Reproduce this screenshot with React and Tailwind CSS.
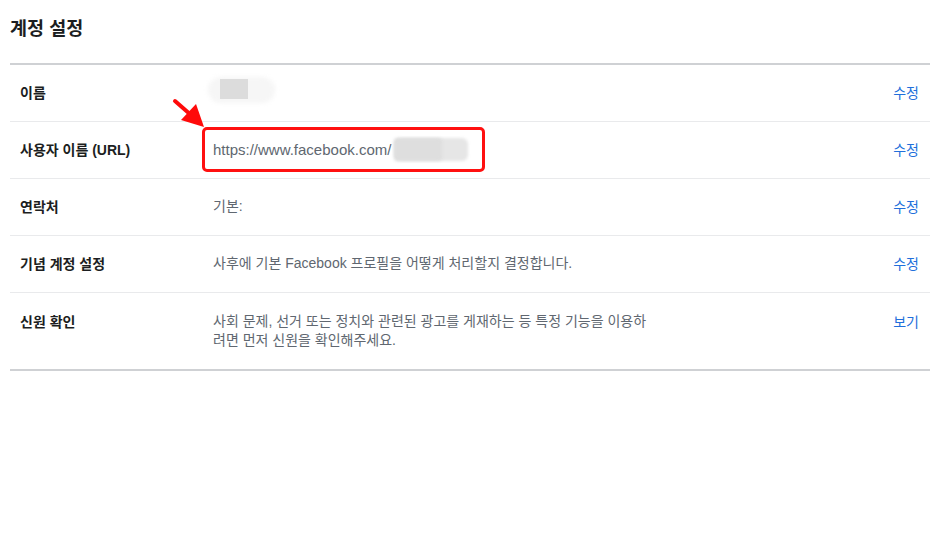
import React from "react";

const FONT = { fontFamily: '"Liberation Sans", "Noto Sans CJK KR", sans-serif' };

function Row({ label, children, action, last, tall }) {
  return (
    <div
      className={
        "flex items-start pl-[10px] pr-[11px] " +
        (tall ? "pt-[19px] pb-[19px] " : "pt-[18px] pb-[18px] ") +
        (last ? "" : "border-b border-[#e9eaec]")
      }
    >
      <div className="w-[193px] shrink-0 text-[14px] leading-[20px] font-bold text-[#1c1e21]">
        {label}
      </div>
      <div className="flex-1 text-[14px] leading-[19px] text-[#606770]">{children}</div>
      <a className="shrink-0 text-[14px] leading-[20px] text-[#216fdb]">{action}</a>
    </div>
  );
}

export default function App() {
  return (
    <div className="relative w-[937px] h-[537px] bg-white" style={FONT}>
      <div className="ml-[10px] mr-[7px]">
        <div className="h-[63px] flex items-center pb-[6px]">
          <h1 className="text-[18.5px] font-bold text-[#1c1e21]">계정 설정</h1>
        </div>
        <div className="border-t-2 border-b-2 border-t-[#cfd1d4] border-b-[#cfd1d4]">
          <Row label="이름" action="수정">
            <div className="relative h-[20px]">
              <div className="absolute left-[-5px] top-[-6px] w-[67px] h-[26px] rounded-full bg-[#f6f6f6] blur-[2px]" />
              <div className="absolute left-[7px] top-[-4px] w-[28px] h-[20px] bg-[#dcdcdc] blur-[0.5px]" />
            </div>
          </Row>
          <Row label="사용자 이름 (URL)" action="수정">
            <div className="relative">
              <div className="absolute left-[-11px] top-[-13px] w-[283px] h-[45px] border-[3px] border-[#ff1010] rounded-[5px]" />
              <span className="text-[15px] leading-[20px]">https://www.facebook.com/</span>
              <div className="absolute left-[181px] top-[-2px] w-[74px] h-[23px] rounded-[6px] bg-[#e6e6e6] blur-[1.5px]" />
              <div className="absolute left-[181px] top-[-2px] w-[48px] h-[23px] rounded-[4px] bg-[#dedede] blur-[1.5px]" />
            </div>
          </Row>
          <Row label="연락처" action="수정">
            기본:
          </Row>
          <Row label="기념 계정 설정" action="수정">
            사후에 기본 Facebook 프로필을 어떻게 처리할지 결정합니다.
          </Row>
          <Row label="신원 확인" action="보기" last tall>
            <div className="w-[440px]">
              사회 문제, 선거 또는 정치와 관련된 광고를 게재하는 등 특정 기능을 이용하
              <br />
              려면 먼저 신원을 확인해주세요.
            </div>
          </Row>
        </div>
      </div>
      <svg className="absolute left-0 top-0 pointer-events-none" width="937" height="537">
        <line x1="175" y1="101" x2="191" y2="115" stroke="#ff0a0a" strokeWidth="4" strokeLinecap="round" />
        <polygon points="181,120 196,104 204,127" fill="#ff0a0a" />
      </svg>
    </div>
  );
}
